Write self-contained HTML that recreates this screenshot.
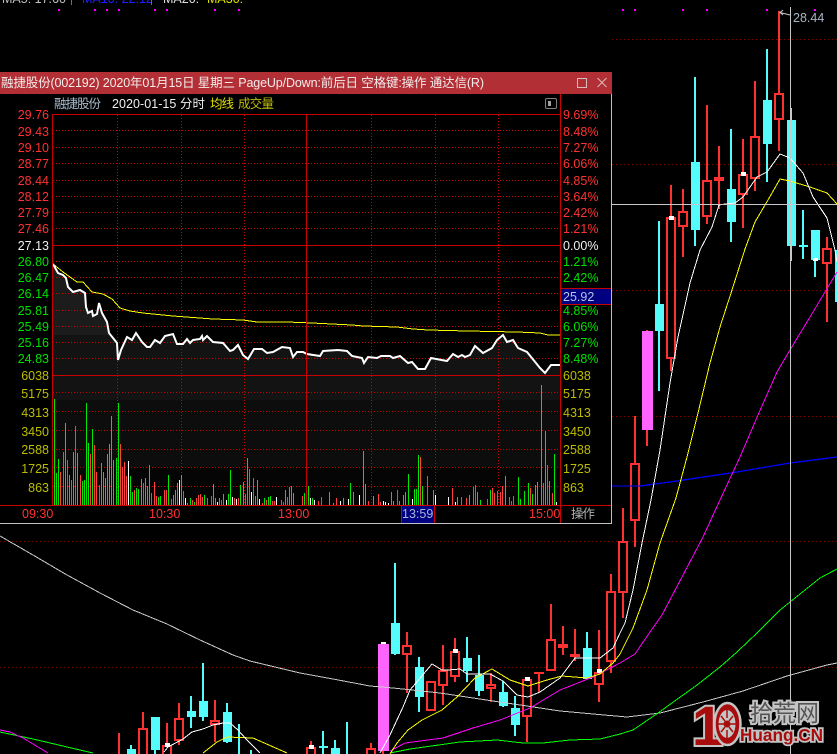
<!DOCTYPE html>
<html><head><meta charset="utf-8">
<style>
html,body{margin:0;padding:0;background:#000;width:837px;height:754px;overflow:hidden}
svg{display:block}
text{font-family:"Liberation Sans","Noto Sans CJK SC",sans-serif;font-size:12.5px}
.c{shape-rendering:crispEdges}
.r{fill:#ff3232}.g{fill:#00e000}.y{fill:#bdbd00}
</style></head><body>
<svg width="837" height="754" viewBox="0 0 837 754" xmlns="http://www.w3.org/2000/svg">
<defs>
<linearGradient id="b" gradientUnits="userSpaceOnUse" x1="0" y1="264" x2="0" y2="505">
<stop offset="0" stop-color="#1c1c1c"/><stop offset=".295" stop-color="#1c1c1c"/>
<stop offset=".295" stop-color="#131313"/><stop offset=".564" stop-color="#131313"/>
<stop offset=".564" stop-color="#0d0d0d"/><stop offset=".842" stop-color="#0d0d0d"/>
<stop offset=".842" stop-color="#050505"/><stop offset="1" stop-color="#050505"/>
</linearGradient>
</defs>
<rect width="837" height="754" fill="#000"/>

<!-- top clipped indicator row -->
<text x="2" y="3" fill="#c0c0c0" font-size="12.5">MA5: 17.60</text>
<text x="82" y="3" fill="#2020ff">MA10: 22.12</text>
<text x="163" y="3" fill="#e0e0e0">MA20:</text>
<text x="207" y="3" fill="#e0e000">MA30:</text>
<path class="c" d="M71.5 0V5M151.5 0V5" stroke="#ff3232" fill="none"/>
<path class="c" fill="#ff00ff" d="M58 9h2v2h-2zM94 9h2v2h-2zM106 9h2v2h-2zM118 9h2v2h-2zM154 9h2v2h-2zM166 9h2v2h-2zM214 9h2v2h-2zM238 9h2v2h-2zM622 9h2v2h-2zM634 9h2v2h-2zM682 9h2v2h-2zM706 9h2v2h-2zM766 9h2v2h-2zM814 9h2v2h-2z"/>

<!-- main grid dotted -->
<path class="c" d="M612 39.5H837M612 164.5H837M612 290.5H837M612 416.5H837M0 541.5H837M0 667.5H837" stroke="#800000" stroke-dasharray="1 3" fill="none"/>

<!-- candle wicks -->
<path class="c" fill="none" stroke="#ff3232" stroke-width="2" d="M119 733V754M143 712V728M167 723V745M179 703V718M179 741V745M215 700V720M215 725V742M311 741V747M371 743V748M383 751V754M407 632V645M407 655V693M443 645V670M443 686V705M455 638V651M455 677V682M491 673V684M491 689V702M527 679V742M539 672V692M551 604V639M563 626V655M575 629V661M599 630V672M599 685V702M611 574V591M611 662V673M623 508V541M623 593V618M635 416V463M635 521V547M647 330V446M671 185V217M671 359V371M683 189V211M683 227V257M707 105V180M707 217V224M719 146V177M719 181V209M743 139V174M743 195V228M755 81V136M755 179V191M779 11V93M779 120V151M827 237V248M827 264V322"/>
<path class="c" fill="none" stroke="#54fcfc" stroke-width="2" d="M131 745V749M155 750V754M191 696V728M203 663V721M227 703V743M239 724V754M251 750V754M323 731V754M335 740V748M347 722V754M395 563V655M419 657V712M467 637V682M479 655V696M503 681V707M515 696V736M587 632V679M659 221V391M695 77V246M731 129V242M767 49V182M791 108V261M803 210V259M815 230V277"/>

<!-- cyan bodies -->
<path class="c" fill="#54fcfc" d="M127 749h9v5h-9zM151 717h9v33h-9zM187 711h9v6h-9zM199 701h9v16h-9zM223 712h9v30h-9zM319 746h9v2h-9zM331 748h9v6h-9zM391 623h9v31h-9zM415 667h9v30h-9zM463 658h9v13h-9zM475 675h9v16h-9zM499 692h9v14h-9zM511 708h9v17h-9zM583 648h9v31h-9zM655 304h9v27h-9zM691 162h9v68h-9zM727 189h9v33h-9zM763 100h9v44h-9zM787 120h9v126h-9zM799 245h9v2h-9zM811 230h9v30h-9zM835 250h2v52h-2z"/>

<!-- red hollow bodies -->
<g class="c" fill="#000" stroke="#ff3232" stroke-width="2">
<rect x="139" y="729" width="8" height="30"/><rect x="163" y="746" width="8" height="12"/><rect x="175" y="719" width="8" height="21"/><rect x="211" y="721" width="8" height="3"/>
<rect x="307" y="748" width="8" height="10"/><rect x="367" y="749" width="8" height="10"/><rect x="403" y="646" width="8" height="8"/><rect x="427" y="682" width="8" height="28"/>
<rect x="439" y="671" width="8" height="14"/><rect x="451" y="652" width="8" height="24"/><rect x="487" y="685" width="8" height="3"/><rect x="523" y="680" width="8" height="36"/>
<rect x="547" y="640" width="8" height="30"/><rect x="595" y="673" width="8" height="11"/><rect x="607" y="592" width="8" height="69"/><rect x="619" y="542" width="8" height="50"/>
<rect x="631" y="464" width="8" height="56"/><rect x="667" y="218" width="8" height="140"/><rect x="679" y="212" width="8" height="14"/><rect x="703" y="181" width="8" height="35"/>
<rect x="715" y="178" width="8" height="2"/><rect x="739" y="175" width="8" height="19"/><rect x="751" y="137" width="8" height="41"/><rect x="775" y="94" width="8" height="25"/><rect x="823" y="249" width="8" height="14"/>
</g>
<path class="c" fill="#ff3232" d="M534 672h10v2h-10zM558 644h10v4h-10zM570 654h10v3h-10z"/>

<!-- magenta bodies -->
<path class="c" fill="#ff64ff" d="M378 644h11v107h-11zM642 331h11v99h-11z"/>

<!-- white caps -->
<path class="c" fill="#fff" d="M165 743h5v4h-5zM309 745h5v4h-5zM381 642h5v2h-5zM453 649h5v4h-5zM525 677h5v4h-5zM597 669h5v4h-5zM669 216h5v4h-5zM741 172h5v4h-5zM813 258h5v3h-5z"/>

<!-- MA lines -->
<g class="c" fill="none">
<polyline stroke="#c8c8c8" points="0,536 33,555 67,575 100,593 133,610 167,624 200,640 233,655 250,661 300,673 333,679 370,686 393,688 440,693 493,701 527,706 560,711 593,714 627,717 660,713 703,702 743,691 787,676 827,665 837,663"/>
<polyline stroke="#0000ff" stroke-width="1.3" points="612,486 640,486 677,481 737,472 790,463 837,457"/>
<polyline stroke="#00ff00" points="0,732 33,739 67,747 93,753"/>
<polyline stroke="#00ff00" points="390,753 410,749 460,742 497,740 523,743 543,743 570,740 600,739 620,734 633,730 658,713 697,685 720,667 737,652 758,632 780,610 820,578 837,569"/>
<polyline stroke="#ff00ff" points="0,730 10,732 23,738 48,753"/>
<polyline stroke="#ff00ff" points="390,751 405,743 443,738 473,728 500,720 530,708 560,690 593,677 620,663 635,654 650,632 662,615 682,577 703,537 720,500 740,457 758,415 777,372 790,350 810,317 837,272"/>
<polyline stroke="#ffff00" points="203,753 217,742 227,737 253,738 287,753"/>
<polyline stroke="#ffff00" points="390,754 397,743 408,730 422,720 442,710 457,697 475,678 492,669 510,680 528,686 547,680 562,676 587,678 600,674 613,663 620,654 633,628 647,590 660,543 676,498 687,457 698,413 710,363 720,327 732,290 745,249 755,222 768,200 780,179 790,181 810,187 827,193 837,204"/>
<polyline stroke="#fff" points="164,752 168,747 183,739 192,732 203,729 213,725 223,723 230,723 238,730 247,740 260,753"/>
<polyline stroke="#fff" points="380,753 390,735 403,707 410,690 432,664 442,670 448,670 460,669 467,674 490,674 503,681 517,695 528,697 540,692 560,678 575,658 600,658 613,648 620,633 625,623 633,590 642,543 651,500 660,450 670,383 678,337 690,283 700,250 712,227 719,205 725,204 735,203 743,197 757,177 767,172 780,154 790,158 803,173 813,197 827,218 835,250 837,262"/>
</g>

<!-- crosshair -->
<path class="c" d="M790.5 7V754M612 204.5H837" stroke="#c8c8c8" fill="none"/>
<path d="M790 15L780 12.5M783 10L780 12.5L783 15" stroke="#c8c8c8" fill="none"/>
<text x="793" y="22" fill="#a8b4c4">28.44</text>

<!-- logo -->
<g>
<text x="750" y="721" fill="#555" stroke="#c4c4c4" stroke-width="4" style="paint-order:stroke;font-size:23px;font-family:'Liberation Sans','Noto Sans CJK SC',sans-serif">拾荒网</text>
<text x="692" y="745" fill="#a80c0c" stroke="#c4c4c4" stroke-width="4" style="paint-order:stroke;font-size:56px;font-weight:bold;font-family:'Liberation Sans',sans-serif">1</text>
<ellipse cx="727.5" cy="724" rx="13" ry="21" fill="#a80c0c" stroke="#c4c4c4" stroke-width="2.5"/>
<ellipse cx="727" cy="724" rx="8.5" ry="14" fill="#c4c4c4"/>
<circle cx="727" cy="724" r="3.5" fill="#a80c0c"/>
<path d="M727 710v8M727 730v8M718 724h6M730 724h6M721 716l4 5M733 716l-4 5M721 732l4-5M733 732l-4-5" stroke="#a80c0c" stroke-width="1.5" fill="none"/>
<text x="740" y="741" fill="#a80c0c" stroke="#c4c4c4" stroke-width="3.5" style="paint-order:stroke;font-size:17.2px;font-weight:bold;font-family:'Liberation Sans',sans-serif">Huang.CN</text>
</g>

<!-- window -->
<rect x="0" y="72" width="612" height="452" fill="#000"/>
<rect x="0" y="72" width="612" height="22" fill="#b22f35"/>
<path class="c" d="M611.5 94V523.5M0 523.5H612" stroke="#c0c0c0" fill="none"/>
<text x="1" y="87" fill="#f4ecec" textLength="483" lengthAdjust="spacing">融捷股份(002192) 2020年01月15日 星期三 PageUp/Down:前后日 空格键:操作 通达信(R)</text>
<rect class="c" x="577.5" y="78.5" width="9" height="9" fill="none" stroke="#d8bcbc"/>
<path d="M597.5 78L606.5 87M606.5 78L597.5 87" stroke="#d8bcbc" fill="none"/>

<text x="54" y="108" fill="#a8bcd0" textLength="47">融捷股份</text>
<text x="112" y="108" fill="#f0f0f0" textLength="93">2020-01-15 分时</text>
<text x="210" y="108" fill="#e0e000" textLength="24">均线</text>
<text x="238" y="108" fill="#bdbd00" textLength="36">成交量</text>
<rect x="545.5" y="98.5" width="11" height="10" rx="1.5" fill="none" stroke="#808080"/>
<rect class="c" x="548" y="101" width="3" height="5" fill="#a0a0a0"/>

<!-- chart fill -->
<polygon fill="url(#b)" points="53,264 58,273 63,275 66,278 68,287 73,292 80,290 85,293 86,307 88,313 92,311 93,316 97,314 99,303 102,313 107,322 109,333 117,343 118,360 121,350 127,337 132,340 136,333 142,342 147,347 150,347 155,340 160,343 165,336 173,334 177,344 183,344 187,339 190,343 193,340 200,339 202,336 203,340 207,336 213,342 223,343 230,351 233,350 238,345 243,355 248,359 254,349 262,349 267,353 273,352 282,347 290,348 293,357 297,352 303,352 307,354 320,356 323,351 338,350 347,351 352,356 362,358 364,363 368,357 377,358 381,356 390,356 393,358 400,356 408,363 412,362 418,369 425,369 431,358 447,361 453,354 458,357 462,355 465,357 470,355 475,346 483,353 492,348 497,340 503,335 507,342 513,340 518,348 527,352 540,368 545,373 551,365 560,365 560,505 53,505"/>

<!-- window grid -->
<path class="c" fill="none" stroke="#cc0000" stroke-dasharray="1 2" d="M53 130.5H560M53 147.5H560M53 163.5H560M53 180.5H560M53 196.5H560M53 212.5H560M53 228.5H560M53 261.5H560M53 277.5H560M53 293.5H560M53 310.5H560M53 326.5H560M53 342.5H560M53 358.5H560M53 392.5H560M53 411.5H560M53 430.5H560M53 449.5H560M53 467.5H560M53 486.5H560M117.5 115V505M181.5 115V505M244.5 115V505M371.5 115V505M435.5 115V505M498.5 115V505"/>

<!-- volume bars -->
<path class="c" fill="none" stroke="#00e600" d="M54.5 399V505M56.5 473V505M58.5 459V505M65.5 423V505M69.5 475V505M73.5 452V505M77.5 453V505M82.5 481V505M84.5 480V505M86.5 403V505M88.5 443V505M92.5 429V505M101.5 463V505M103.5 472V505M105.5 478V505M107.5 454V505M109.5 444V505M111.5 416V505M113.5 460V505M116.5 458V505M118.5 403V505M130.5 476V505M132.5 492V505M136.5 488V505M138.5 489V505M141.5 479V505M145.5 478V505M147.5 486V505M149.5 465V505M158.5 497V505M160.5 496V505M168.5 475V505M173.5 495V505M175.5 490V505M177.5 483V505M181.5 475V505M187.5 503V505M190.5 498V505M194.5 502V505M204.5 495V505M213.5 484V505M215.5 498V505M219.5 498V505M223.5 494V505M228.5 494V505M230.5 470V505M240.5 485V505M243.5 482V505M247.5 458V505M255.5 496V505M257.5 480V505M264.5 498V505M268.5 497V505M270.5 496V505M285.5 490V505M289.5 487V505M291.5 486V505M293.5 493V505M304.5 493V505M308.5 486V505M312.5 498V505M329.5 492V505M333.5 503V505M343.5 498V505M350.5 483V505M353.5 492V505M363.5 451V505M365.5 484V505M373.5 496V505M391.5 492V505M393.5 501V505M399.5 501V505M403.5 495V505M405.5 492V505M408.5 474V505M414.5 489V505M416.5 489V505M418.5 455V505M422.5 486V505M433.5 490V505M457.5 497V505M469.5 495V505M477.5 492V505M480.5 500V505M490.5 490V505M505.5 476V505M518.5 477V505M520.5 499V505M524.5 491V505M528.5 483V505M532.5 494V505M535.5 485V505M537.5 482V505M541.5 385V505M545.5 431V505M549.5 481V505M554.5 454V505"/>
<path class="c" fill="none" stroke="#ff4040" d="M60.5 472V505M63.5 452V505M67.5 460V505M71.5 480V505M75.5 426V505M80.5 475V505M90.5 454V505M94.5 445V505M96.5 472V505M99.5 485V505M120.5 444V505M122.5 467V505M124.5 462V505M126.5 476V505M134.5 490V505M143.5 483V505M151.5 493V505M154.5 482V505M156.5 496V505M164.5 490V505M166.5 490V505M171.5 499V505M183.5 491V505M192.5 500V505M196.5 498V505M198.5 495V505M200.5 494V505M202.5 497V505M207.5 498V505M211.5 496V505M221.5 500V505M234.5 498V505M238.5 498V505M245.5 494V505M249.5 469V505M253.5 478V505M262.5 503V505M266.5 500V505M272.5 501V505M274.5 501V505M281.5 500V505M283.5 502V505M287.5 497V505M302.5 496V505M318.5 501V505M321.5 497V505M336.5 498V505M368.5 501V505M378.5 494V505M380.5 502V505M397.5 490V505M420.5 457V505M427.5 476V505M452.5 488V505M461.5 497V505M466.5 498V505M473.5 487V505M475.5 485V505M487.5 499V505M492.5 488V505M494.5 493V505M497.5 491V505M500.5 492V505M502.5 486V505M509.5 497V505M511.5 501V505M513.5 496V505M530.5 488V505M543.5 483V505M547.5 465V505M552.5 493V505"/>
<path class="c" fill="none" stroke="#ffffff" d="M128.5 461V505M179.5 480V505M185.5 498V505M217.5 502V505M226.5 500V505M232.5 497V505M236.5 499V505M251.5 492V505M259.5 499V505M276.5 497V505M310.5 498V505M314.5 500V505M340.5 501V505M348.5 499V505M359.5 495V505M383.5 501V505M385.5 502V505M388.5 503V505M412.5 499V505M435.5 495V505M448.5 497V505M455.5 502V505M556.5 502V505M560.5 455V505"/>

<!-- price lines -->
<polyline fill="none" stroke="#ffff00" points="53,264 63,272 77,282 83,282 92,292 103,294 112,299 120,308 130,311 143,313 173,316 213,319 243,320 257,322 287,322 312,323 352,325 363,326 397,327 413,329 428,330 467,331 517,332 540,333 548,335 560,335" class="c"/>
<polyline fill="none" stroke="#fff" stroke-width="2" points="53,264 58,273 63,275 66,278 68,287 73,292 80,290 85,293 86,307 88,313 92,311 93,316 97,314 99,303 102,313 107,322 109,333 117,343 118,360 121,350 127,337 132,340 136,333 142,342 147,347 150,347 155,340 160,343 165,336 173,334 177,344 183,344 187,339 190,343 193,340 200,339 202,336 203,340 207,336 213,342 223,343 230,351 233,350 238,345 243,355 248,359 254,349 262,349 267,353 273,352 282,347 290,348 293,357 297,352 303,352 307,354 320,356 323,351 338,350 347,351 352,356 362,358 364,363 368,357 377,358 381,356 390,356 393,358 400,356 408,363 412,362 418,369 425,369 431,358 447,361 453,354 458,357 462,355 465,357 470,355 475,346 483,353 492,348 497,340 503,335 507,342 513,340 518,348 527,352 540,368 545,373 551,365 560,365"/>

<!-- frame lines -->
<path class="c" fill="none" stroke="#c80000" d="M52.5 114.5H560.5M52.5 114V505M306.5 114V505M560.5 94V523M52 245.5H560M52 375.5H560M0 505.5H611M560 288.5H611M560 304.5H611"/>
<rect class="c" x="561" y="289" width="50" height="15" fill="#000080"/>
<rect class="c" x="402" y="506" width="32" height="17" fill="#000080"/>
<path class="c" fill="none" stroke="#c80000" d="M401.5 505V523M434.5 505V523"/>
<text x="563" y="301" fill="#b4c4e8">25.92</text>

<!-- left labels -->
<g text-anchor="end">
<text class="r" x="49" y="119">29.76</text><text class="r" x="49" y="136">29.43</text><text class="r" x="49" y="152">29.10</text><text class="r" x="49" y="168">28.77</text><text class="r" x="49" y="185">28.44</text><text class="r" x="49" y="201">28.12</text><text class="r" x="49" y="217">27.79</text><text class="r" x="49" y="233">27.46</text>
<text x="49" y="250" fill="#f0f0f0">27.13</text>
<text class="g" x="49" y="266">26.80</text><text class="g" x="49" y="282">26.47</text><text class="g" x="49" y="298">26.14</text><text class="g" x="49" y="315">25.81</text><text class="g" x="49" y="331">25.49</text><text class="g" x="49" y="347">25.16</text><text class="g" x="49" y="363">24.83</text>
<text class="y" x="49" y="380">6038</text><text class="y" x="49" y="398">5175</text><text class="y" x="49" y="417">4313</text><text class="y" x="49" y="436">3450</text><text class="y" x="49" y="454">2588</text><text class="y" x="49" y="473">1725</text><text class="y" x="49" y="492">863</text>
</g>
<!-- right labels -->
<text class="r" x="563" y="119">9.69%</text><text class="r" x="563" y="136">8.48%</text><text class="r" x="563" y="152">7.27%</text><text class="r" x="563" y="168">6.06%</text><text class="r" x="563" y="185">4.85%</text><text class="r" x="563" y="201">3.64%</text><text class="r" x="563" y="217">2.42%</text><text class="r" x="563" y="233">1.21%</text>
<text x="563" y="250" fill="#f0f0f0">0.00%</text>
<text class="g" x="563" y="266">1.21%</text><text class="g" x="563" y="282">2.42%</text><text class="g" x="563" y="315">4.85%</text><text class="g" x="563" y="331">6.06%</text><text class="g" x="563" y="347">7.27%</text><text class="g" x="563" y="363">8.48%</text>
<text class="y" x="563" y="380">6038</text><text class="y" x="563" y="398">5175</text><text class="y" x="563" y="417">4313</text><text class="y" x="563" y="436">3450</text><text class="y" x="563" y="454">2588</text><text class="y" x="563" y="473">1725</text><text class="y" x="563" y="492">863</text>
<!-- time axis -->
<text class="r" x="22" y="518">09:30</text><text class="r" x="149" y="518">10:30</text><text class="r" x="278" y="518">13:00</text>
<text x="402" y="518" fill="#a8b8d8">13:59</text>
<text class="r" x="529" y="518">15:00</text>
<text x="571" y="518" fill="#b0b0b0" textLength="24">操作</text>
</svg>
</body></html>
